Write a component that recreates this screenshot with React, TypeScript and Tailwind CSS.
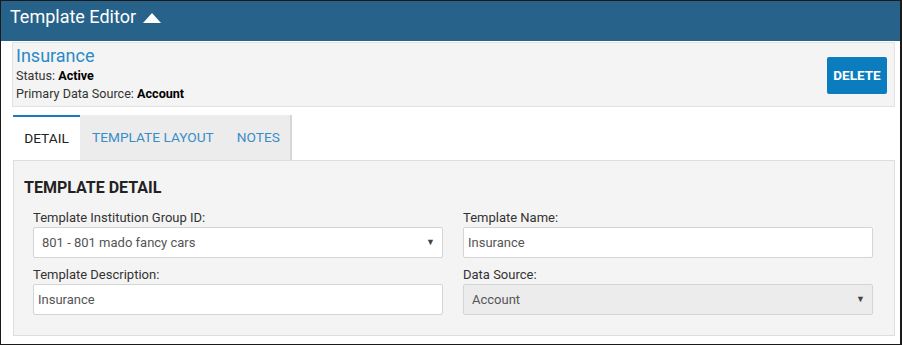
import React from "react";

export default function App() {
  return (
    <div className="w-[902px] h-[345px] bg-white border border-[#1a1a1a] border-r-2 box-border flex flex-col overflow-hidden" style={{ fontFamily: "Roboto, 'Liberation Sans', sans-serif" }}>
      <div className="h-[40px] bg-[#27628a] flex items-start pl-[9px] pt-[4px] shrink-0">
        <span className="text-white text-[18px] leading-[24px]">Template Editor</span>
        <svg width="18" height="10" viewBox="0 0 18 10" className="ml-[7px] mt-[8px]">
          <polygon points="9,0 18,10 0,10" fill="#ffffff" />
        </svg>
      </div>
      <div className="pl-[11px] pr-[5px] pt-[1px] flex flex-col">
        <div className="h-[65px] bg-[#f4f4f4] border border-[#e2e2e2] flex items-start justify-between pl-[3px] pr-[7px]">
          <div className="flex flex-col pt-[2px]">
            <span className="text-[#2a8ac6] text-[18px] leading-[22px]">Insurance</span>
            <span className="text-[#333] text-[12.6px] leading-[18px]">Status: <b className="text-black">Active</b></span>
            <span className="text-[#333] text-[12.6px] leading-[18px]">Primary Data Source: <b className="text-black">Account</b></span>
          </div>
          <button className="mt-[14px] w-[60px] h-[37px] bg-[#0b7dbe] rounded-[2px] text-white text-[13.5px] font-bold">DELETE</button>
        </div>
        <div className="mt-[8px] flex pl-[1px] h-[45px]">
          <div className="w-[67px] bg-white border-t-2 border-[#1b7ac0] flex items-center justify-center text-[13.7px] text-[#222]">DETAIL</div>
          <div className="bg-[#ececec] border-r-2 border-[#d6d6d6] flex items-center text-[13.7px] text-[#3a8cc8]">
            <span className="pl-[12px] pr-[12px]">TEMPLATE LAYOUT</span>
            <span className="pl-[11px] pr-[10px]">NOTES</span>
          </div>
        </div>
        <div className="ml-[1px] h-[176px] bg-[#f4f4f4] border border-[#dedede] pl-[10px] pt-[17px] pr-[21px]">
          <div className="text-[16px] font-bold text-[#222] leading-[20px]">TEMPLATE DETAIL</div>
          <div className="grid grid-cols-2 gap-x-[20px] pl-[9px] mt-[11px]">
            <div className="flex flex-col">
              <label className="text-[13px] text-[#333] leading-[18px]">Template Institution Group ID:</label>
              <div className="h-[31px] bg-white border border-[#d4d4d4] rounded-[2px] flex items-center justify-between pl-[8px] pr-[7px] text-[13px] text-[#555]">
                <span>801 - 801 mado fancy cars</span>
                <span className="text-[9px] text-[#444]">▼</span>
              </div>
            </div>
            <div className="flex flex-col">
              <label className="text-[13px] text-[#333] leading-[18px]">Template Name:</label>
              <div className="h-[31px] bg-white border border-[#d4d4d4] rounded-[2px] flex items-center pl-[4px] text-[13px] text-[#555]">Insurance</div>
            </div>
            <div className="flex flex-col mt-[8px]">
              <label className="text-[13px] text-[#333] leading-[18px]">Template Description:</label>
              <div className="h-[31px] bg-white border border-[#d4d4d4] rounded-[2px] flex items-center pl-[4px] text-[13px] text-[#555]">Insurance</div>
            </div>
            <div className="flex flex-col mt-[8px]">
              <label className="text-[13px] text-[#333] leading-[18px]">Data Source:</label>
              <div className="h-[31px] bg-[#ececec] border border-[#d4d4d4] rounded-[2px] flex items-center justify-between pl-[8px] pr-[7px] text-[13px] text-[#555]">
                <span>Account</span>
                <span className="text-[9px] text-[#444]">▼</span>
              </div>
            </div>
          </div>
        </div>
      </div>
    </div>
  );
}
